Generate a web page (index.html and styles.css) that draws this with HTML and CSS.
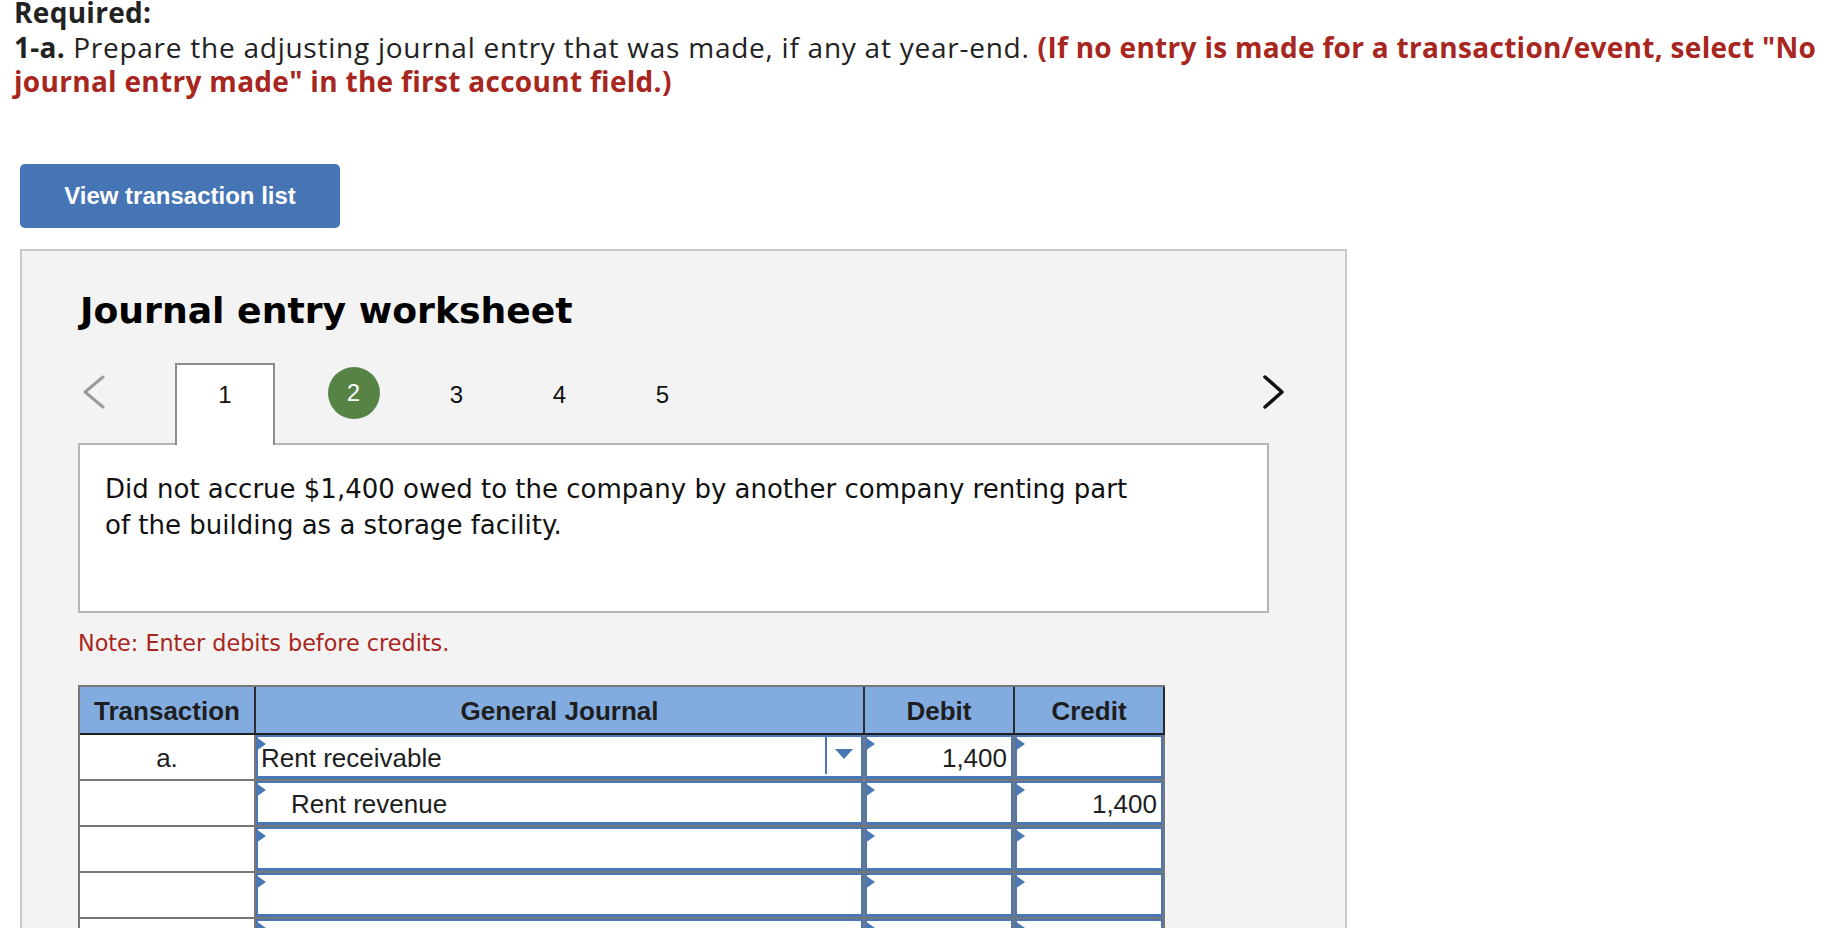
FILE: index.html
```html
<!DOCTYPE html>
<html lang="en">
<head>
<meta charset="utf-8">
<title>Journal entry worksheet</title>
<link rel="stylesheet" href="styles.css">
</head>
<body>
<div class="intro">
  <p class="req">Required:</p>
  <p class="task"><b>1-a.</b> Prepare the adjusting journal entry that was made, if any at year-end. <span class="red">(If no entry is made for a transaction/event, select "No<br>journal entry made" in the first account field.)</span></p>
</div>

<button class="view-btn" type="button">View transaction list</button>

<section class="panel">
  <h2 class="ws-title">Journal entry worksheet</h2>

  <div class="tabs">
    <svg class="chev chev-left" width="30" height="34" viewBox="0 0 30 34"><path d="M21 2 L3 17 L21 32" fill="none" stroke="#9b9b9b" stroke-width="3" stroke-linecap="round" stroke-linejoin="round"/></svg>
    <div class="tab tab-active">1</div>
    <div class="tab tab-first tab-done"><span class="done-dot">2</span></div>
    <div class="tab">3</div>
    <div class="tab">4</div>
    <div class="tab">5</div>
    <span class="tabs-spacer"></span>
    <svg class="chev chev-right" width="30" height="34" viewBox="0 0 30 34"><path d="M5 2 L22 17 L5 32" fill="none" stroke="#111" stroke-width="3.5" stroke-linecap="round" stroke-linejoin="round"/></svg>
  </div>

  <div class="desc">Did not accrue $1,400 owed to the company by another company renting part<br>of the building as a storage facility.</div>

  <p class="note">Note: Enter debits before credits.</p>

  <div class="journal">
    <div class="jh">Transaction</div>
    <div class="jh">General Journal</div>
    <div class="jh">Debit</div>
    <div class="jh">Credit</div>

    <div class="jc jt">a.</div>
    <div class="jc"><div class="inp inp-acct"><span class="acct">Rent receivable</span><span class="dd"><span class="dd-arrow"></span></span></div></div>
    <div class="jc"><div class="inp inp-num">1,400</div></div>
    <div class="jc"><div class="inp inp-num"></div></div>

    <div class="jc jt"></div>
    <div class="jc"><div class="inp inp-acct"><span class="acct acct-credit">Rent revenue</span></div></div>
    <div class="jc"><div class="inp inp-num"></div></div>
    <div class="jc"><div class="inp inp-num">1,400</div></div>

    <div class="jc jt"></div>
    <div class="jc"><div class="inp inp-acct"></div></div>
    <div class="jc"><div class="inp inp-num"></div></div>
    <div class="jc"><div class="inp inp-num"></div></div>

    <div class="jc jt"></div>
    <div class="jc"><div class="inp inp-acct"></div></div>
    <div class="jc"><div class="inp inp-num"></div></div>
    <div class="jc"><div class="inp inp-num"></div></div>

    <div class="jc jt"></div>
    <div class="jc"><div class="inp inp-acct"></div></div>
    <div class="jc"><div class="inp inp-num"></div></div>
    <div class="jc"><div class="inp inp-num"></div></div>

    <div class="jc jt"></div>
    <div class="jc"><div class="inp inp-acct"></div></div>
    <div class="jc"><div class="inp inp-num"></div></div>
    <div class="jc"><div class="inp inp-num"></div></div>
  </div>
</section>
</body>
</html>
```

FILE: styles.css
```css
html, body {
  margin: 0;
  padding: 0;
  height: 100%;
  overflow: hidden;
  background: #ffffff;
}

.intro {
  padding: 0 14px;
  font-family: "Open Sans", Lato, sans-serif;
  font-size: 28px;
  line-height: 34px;
  letter-spacing: 0.75px;
  color: #222222;
}

.intro p {
  margin: 0;
}

.req {
  font-weight: 700;
  line-height: 25px;
  letter-spacing: 0.3px;
}

.task {
  padding-top: 5px;
}

.task b {
  font-weight: 700;
  letter-spacing: 0.3px;
}

.red {
  color: #a82620;
  font-weight: 700;
  letter-spacing: 0.3px;
}

.view-btn {
  display: block;
  width: 320px;
  height: 64px;
  margin: 66px 0 0 20px;
  padding: 0;
  border: none;
  border-radius: 5px;
  background: #4675b5;
  color: #ffffff;
  font-family: "Liberation Sans", Arial, sans-serif;
  font-weight: 700;
  font-size: 24px;
}

.panel {
  box-sizing: border-box;
  width: 1327px;
  min-height: 900px;
  margin: 21px 0 0 20px;
  padding: 38px 0 40px 56px;
  border: 2px solid #c9c9c9;
  background: #f3f3f3;
}

.ws-title {
  margin: 0;
  padding-left: 2px;
  font-family: "DejaVu Sans", Verdana, sans-serif;
  font-weight: 700;
  font-size: 36.2px;
  line-height: 44px;
  color: #000000;
}

.tabs {
  position: relative;
  z-index: 1;
  display: flex;
  align-items: flex-start;
  width: 1212px;
  height: 80px;
  margin-top: 30px;
  font-family: "Liberation Sans", Arial, sans-serif;
  font-size: 24px;
  color: #111111;
}

.chev {
  flex: none;
  margin-top: 12px;
}

.chev-left {
  margin-left: 4px;
  margin-right: 63px;
}

.tab {
  flex: none;
  box-sizing: border-box;
  width: 103px;
  height: 60px;
  padding-top: 2px;
  line-height: 60px;
  text-align: center;
}

.tab-active {
  width: 100px;
  height: 82px;
  padding-top: 0;
  border: 2px solid #8c8c8c;
  border-bottom: none;
  background: #ffffff;
}

.tab-first {
  margin-left: 27px;
}

.tab-done {
  display: flex;
  justify-content: center;
  align-items: flex-start;
  padding-top: 4px;
}

.done-dot {
  display: flex;
  align-items: center;
  justify-content: center;
  width: 52px;
  height: 52px;
  border-radius: 50%;
  background: #578446;
  color: #ffffff;
  line-height: 52px;
}

.tabs-spacer {
  flex: 1;
}

.desc {
  box-sizing: border-box;
  width: 1191px;
  height: 170px;
  padding: 26px 25px;
  border: 2px solid #b5b5b5;
  background: #ffffff;
  font-family: "DejaVu Sans", Verdana, sans-serif;
  font-size: 26px;
  line-height: 36px;
  color: #111111;
}

.note {
  margin: 17px 0 0;
  font-family: "DejaVu Sans", Verdana, sans-serif;
  font-size: 22.3px;
  line-height: 26px;
  color: #a82620;
}

.journal {
  box-sizing: border-box;
  display: grid;
  grid-template-columns: 176px 609px 150px 150px;
  width: 1087px;
  margin-top: 29px;
  border-left: 2px solid #777777;
  border-top: 2px solid #777777;
  font-family: "Liberation Sans", Arial, sans-serif;
  font-size: 26px;
  color: #1e1e1e;
}

.jh {
  box-sizing: border-box;
  height: 48px;
  padding-top: 2px;
  line-height: 44px;
  text-align: center;
  font-weight: 700;
  background: #82ace0;
  border-right: 2px solid #2a2a2a;
  border-bottom: 2px solid #1f1f1f;
}

.jc {
  box-sizing: border-box;
  height: 46px;
  background: #ffffff;
  border-right: 2px solid #777777;
  border-bottom: 2px solid #777777;
}

.jt {
  padding-top: 5px;
  line-height: 36px;
  text-align: center;
}

.inp {
  position: relative;
  box-sizing: border-box;
  display: flex;
  height: 44px;
  padding: 3px 4px 0 3px;
  border: 2px solid #4a78b4;
  border-bottom-width: 3px;
  line-height: 36px;
  background: #ffffff;
}

.inp::before {
  content: "";
  position: absolute;
  left: -2px;
  top: 0;
  width: 0;
  height: 0;
  border-left: 10px solid #4a78b4;
  border-top: 7px solid transparent;
  border-bottom: 7px solid transparent;
}

.inp-acct {
  padding-right: 0;
}

.inp-num {
  justify-content: flex-end;
}

.acct {
  flex: 1;
  white-space: nowrap;
}

.acct-credit {
  padding-left: 30px;
}

.dd {
  flex: none;
  box-sizing: border-box;
  display: flex;
  justify-content: center;
  align-items: flex-start;
  width: 36px;
  height: 37px;
  margin-top: -3px;
  padding-top: 12px;
  border-left: 2px solid #4a78b4;
}

.dd-arrow {
  width: 0;
  height: 0;
  border-top: 10px solid #4a78b4;
  border-left: 9px solid transparent;
  border-right: 9px solid transparent;
}
```
